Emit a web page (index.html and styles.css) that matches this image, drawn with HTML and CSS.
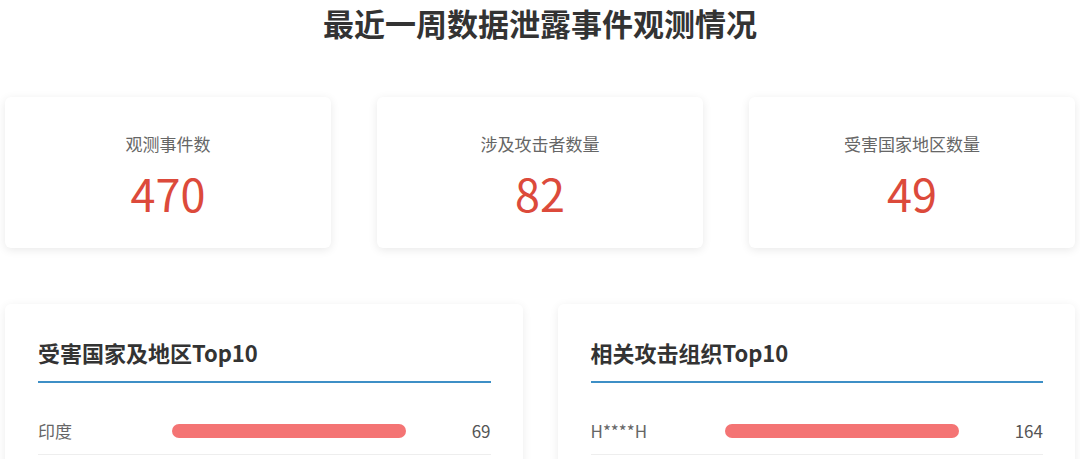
FILE: index.html
```html
<!DOCTYPE html>
<html lang="zh-CN">
<head>
  <meta charset="UTF-8">
  <title>最近一周数据泄露事件观测情况</title>
  <link rel="stylesheet" href="styles.css">
</head>
<body>
  <div class="page">
    <h1 class="title">最近一周数据泄露事件观测情况</h1>

    <div class="stats">
      <div class="stat-card">
        <div class="stat-label">观测事件数</div>
        <div class="stat-num">470</div>
      </div>
      <div class="stat-card">
        <div class="stat-label">涉及攻击者数量</div>
        <div class="stat-num">82</div>
      </div>
      <div class="stat-card">
        <div class="stat-label">受害国家地区数量</div>
        <div class="stat-num">49</div>
      </div>
    </div>

    <div class="tops">
      <div class="top-card">
        <h2 class="top-title">受害国家及地区Top10</h2>
        <ul class="top-list">
          <li class="top-row">
            <span class="row-name">印度</span>
            <span class="row-bar"><i style="width: 100%"></i></span>
            <span class="row-val">69</span>
          </li>
        </ul>
      </div>
      <div class="top-card">
        <h2 class="top-title">相关攻击组织Top10</h2>
        <ul class="top-list">
          <li class="top-row">
            <span class="row-name">H****H</span>
            <span class="row-bar"><i style="width: 100%"></i></span>
            <span class="row-val">164</span>
          </li>
        </ul>
      </div>
    </div>
  </div>
</body>
</html>
```

FILE: styles.css
```css
* {
    margin: 0;
    padding: 0;
    box-sizing: border-box;
}

body {
    background: #fff;
    font-family: "Noto Sans CJK SC", "Noto Sans", sans-serif;
    color: #333;
}

li {
    list-style: none;
}

.page {
    padding: 0 5px;
}

.title {
    text-align: center;
    font-size: 31px;
    font-weight: 700;
    line-height: 46px;
    color: #333;
    margin-bottom: 51px;
}

.stats {
    display: grid;
    grid-template-columns: repeat(3, 1fr);
    gap: 46px;
}

.stat-card {
    height: 151px;
    background: #fff;
    border-radius: 6px;
    box-shadow: 0 2px 10px rgba(0, 0, 0, 0.09);
    text-align: center;
    padding-top: 34px;
}

.stat-label {
    font-size: 17px;
    line-height: 26px;
    color: #666;
}

.stat-num {
    font-size: 45px;
    line-height: 44px;
    margin-top: 14px;
    color: #dc4a3b;
}

.tops {
    display: grid;
    grid-template-columns: 1fr 1fr;
    gap: 35px;
    margin-top: 56px;
}

.top-card {
    background: #fff;
    border-radius: 6px;
    box-shadow: 0 2px 10px rgba(0, 0, 0, 0.08);
    padding: 34px 32px 0 33px;
    height: 170px;
}

.top-title {
    font-size: 22px;
    font-weight: 700;
    line-height: 28px;
    color: #333;
    padding-bottom: 15px;
    border-bottom: 2px solid #3d8fc6;
}

.top-row {
    display: grid;
    grid-template-columns: 134px 234px 1fr;
    align-items: center;
    height: 72px;
    padding-top: 24px;
    border-bottom: 1px solid #eee;
}

.row-name {
    font-size: 17px;
    color: #666;
}

.row-bar {
    height: 14px;
}

.row-bar i {
    display: block;
    height: 14px;
    border-radius: 7px;
    background: #f47474;
}

.row-val {
    text-align: right;
    font-size: 17px;
    color: #555;
}
```
